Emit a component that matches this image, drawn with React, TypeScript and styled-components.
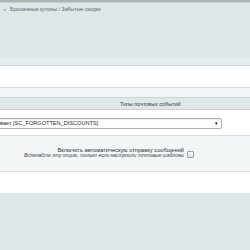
import React from "react";
import styled, { createGlobalStyle } from "styled-components";

const GlobalStyle = createGlobalStyle`
  html, body {
    margin: 0;
    padding: 0;
    background: #dee7e8;
    font-family: "Liberation Sans", Arial, sans-serif;
    overflow: hidden;
  }
  * { box-sizing: border-box; }
`;

const Page = styled.div`
  width: 250px;
  height: 250px;
  display: flex;
  flex-direction: column;
  overflow: hidden;
`;

const TopBar = styled.div`
  height: 3px;
  background: #aab3b6;
  border-bottom: 1px solid #c6cfd1;
`;

const Breadcrumbs = styled.div`
  display: flex;
  align-items: center;
  gap: 4px;
  padding: 2px 0 0 4px;
  height: 10px;
  font-size: 5.2px;
  color: #4d6b80;
  white-space: nowrap;
`;

const Arrow = styled.span`
  font-size: 4px;
  color: #7d8f99;
`;

const Spacer = styled.div<{ $h: number }>`
  height: ${(p) => p.$h}px;
  flex: none;
`;

const TabStrip = styled.div`
  height: 9px;
  background: #e5eced;
  border-bottom: 1px solid #cbd4d6;
`;

const Form = styled.div`
  background: #ffffff;
  display: flex;
  flex-direction: column;
`;

const Blank = styled.div<{ $h: number }>`
  height: ${(p) => p.$h}px;
`;

const Band = styled.div`
  height: 10px;
  background: #f1f5f5;
  border-top: 1px solid #d3dbdd;
`;

const Header = styled.div`
  height: 13px;
  background: #dfe7e9;
  border-top: 1px solid #c9d2d4;
  border-bottom: 1px solid #c9d2d4;
  display: flex;
  align-items: center;
  justify-content: flex-start;
  padding-left: 120px;
  font-size: 5.4px;
  color: #2f3d44;
  white-space: nowrap;
`;

const SelectRow = styled.div`
  height: 25px;
  display: flex;
  align-items: center;
  padding-top: 1px;
`;

const SelectBox = styled.div`
  margin-left: -8px;
  width: 230px;
  height: 11px;
  border: 1px solid #a9b2b5;
  border-radius: 2px;
  box-shadow: inset 0 1px 1px rgba(0, 0, 0, 0.08);
  background: #ffffff;
  display: flex;
  align-items: center;
  justify-content: space-between;
  padding: 0 3px 0 7px;
  font-size: 5.6px;
  color: #1f2a30;
  white-space: nowrap;
`;

const Caret = styled.span`
  font-size: 5px;
  color: #000;
`;

const OptionArea = styled.div`
  height: 37px;
  background: #f2f6f6;
  border-top: 1px solid #d6dfe0;
  border-bottom: 1px solid #d6dfe0;
  display: flex;
  align-items: center;
  padding-left: 40px;
  padding-bottom: 1px;
`;

const LabelCol = styled.div`
  width: 144px;
  display: flex;
  flex-direction: column;
  align-items: flex-end;
  line-height: 6.5px;
  white-space: nowrap;
`;

const LabelMain = styled.span`
  font-size: 5.7px;
  color: #2a3338;
`;

const LabelHint = styled.span`
  font-size: 4.95px;
  font-style: italic;
  color: #3a4448;
`;

const Checkbox = styled.span`
  margin-left: 3px;
  margin-top: 2px;
  width: 7px;
  height: 7px;
  border: 1px solid #9aa4a8;
  border-radius: 1px;
  background: linear-gradient(#fafbfb, #dde3e5);
`;

export default function App() {
  return (
    <Page>
      <GlobalStyle />
      <TopBar />
      <Breadcrumbs>
        <Arrow>▸</Arrow>
        <span>Брошенные купоны / Забытые скидки</span>
      </Breadcrumbs>
      <Spacer $h={44} />
      <TabStrip />
      <Form>
        <Blank $h={21} />
        <Band />
        <Header>Типы почтовых событий</Header>
        <SelectRow>
          <SelectBox>
            <span>вает [SC_FORGOTTEN_DISCOUNTS]</span>
            <Caret>▾</Caret>
          </SelectBox>
        </SelectRow>
        <OptionArea>
          <LabelCol>
            <LabelMain>Включить автоматическую отправку сообщений</LabelMain>
            <LabelHint>Включайте эту опцию, только если настроили почтовые шаблоны</LabelHint>
          </LabelCol>
          <Checkbox />
        </OptionArea>
        <Blank $h={21} />
      </Form>
    </Page>
  );
}
